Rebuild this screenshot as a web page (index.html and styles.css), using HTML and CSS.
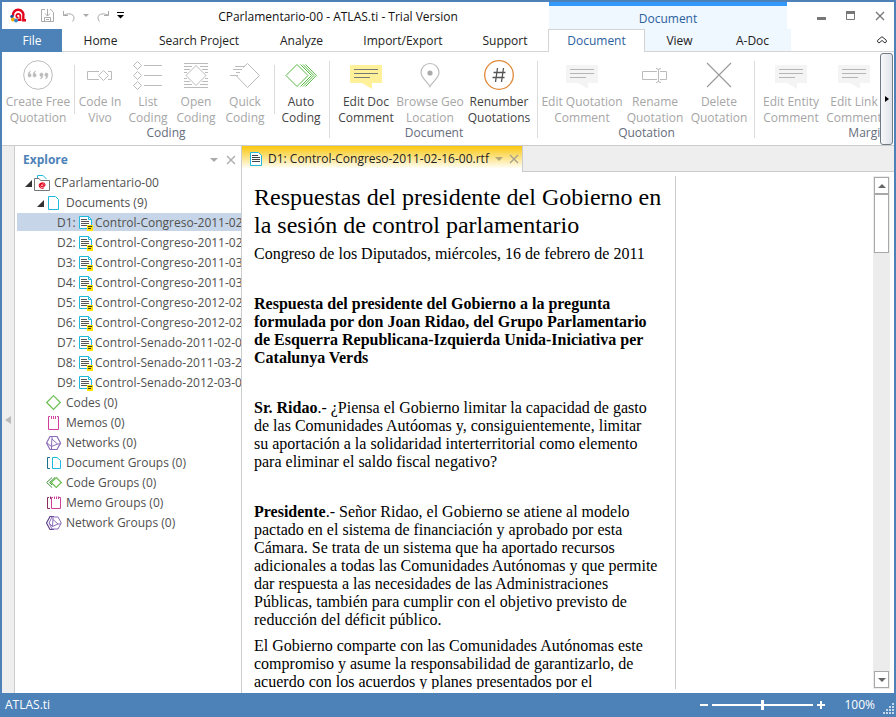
FILE: index.html
```html
<!DOCTYPE html>
<html lang="en">
<head>
<meta charset="utf-8">
<title>CParlamentario-00 - ATLAS.ti - Trial Version</title>
<link rel="stylesheet" href="styles.css">
</head>
<body>
<svg class="defs" aria-hidden="true">
  <symbol id="i-text-doc" viewBox="0 0 15 16"><path d="M.500 1.500H9.500L12.500 4.500V13.500H.500Z" fill="#fff" stroke="#1fb9dd"/><path d="M9.500 1.500V4.500H12.500" fill="none" stroke="#1fb9dd"/><path d="M2 4.500H8M2 6.500H10M2 8.500H10M2 10.500H8" stroke="#555"/><rect x="8" y="10" width="6" height="6" fill="#ffe400"/><path d="M9 11.500H13M9 13.500H12" stroke="#333"/></symbol>
  <symbol id="i-comment" viewBox="0 0 32 26"><path d="M0 1H32V19H22V25L12 19H0Z" fill="var(--note)"/><path d="M4 5.500H28M4 9.500H28M4 13.500H20" stroke="var(--line)" fill="none"/></symbol>
  <symbol id="i-close" viewBox="0 0 10 10"><path d="M1 1L9 9M9 1L1 9" stroke="currentColor" stroke-width="1.300" fill="none"/></symbol>
  <symbol id="i-down" viewBox="0 0 8 4"><path d="M0 0H8L4 4Z" fill="currentColor"/></symbol>
  <symbol id="i-open" viewBox="0 0 7 7"><path d="M7 0V7H0Z" fill="#333"/></symbol>
</svg>

<div class="window">
  <header class="titlebar">
    <div class="quick">
      <svg class="logo" viewBox="0 0 16 15"><path d="M3 8A5.300 5.300 0 1 1 13.300 8.500V12.300H16" fill="none" stroke="#e2001a" stroke-width="2.400"/><path d="M7.500 12H11.500M10.300 12V8A2 2 0 1 0 8.500 9.800" fill="none" stroke="#e2001a" stroke-width="1.800"/><circle cx="2" cy="8.500" r="1.700" fill="#1b4fa0"/><circle cx="3" cy="11.500" r="2" fill="#f5a800"/><circle cx="6" cy="12.500" r="1.900" fill="#3585c9"/></svg>
      <button class="plain" aria-label="Save"><svg width="14" height="14" viewBox="0 0 14 14" fill="none" stroke="#aaa"><path d="M4 .500H.500V12.500H12.500V3.500L10 .500H9M6.500 0V7M4 4.500L6.500 7L9 4.500M3.500 12V8.500H9.500V12M5 10.500H8"/></svg></button>
      <button class="plain" aria-label="Undo"><svg width="12" height="12" viewBox="0 0 12 12" fill="none" stroke="#aaa"><path d="M.500 1V5.500H5M.500 5.500C4 3 11 3 11 8Q11 10 9.500 11.500"/></svg></button>
      <button class="plain" aria-label="Undo history"><svg width="6" height="3" viewBox="0 0 8 4" color="#aaa"><use href="#i-down"/></svg></button>
      <button class="plain" aria-label="Redo"><svg width="12" height="12" viewBox="0 0 12 12" fill="none" stroke="#aaa"><path d="M11.500 1V5.500H7M11.500 5.500C8 3 1 3 1 8Q1 10 2.500 11.500"/></svg></button>
      <button class="plain" aria-label="Customize toolbar"><svg width="7" height="7" viewBox="0 0 7 7"><path d="M0 0H7V1H0ZM0 3H7L3.500 6.500Z" fill="#000"/></svg></button>
    </div>
    <h1 class="caption">CParlamentario-00 - ATLAS.ti - Trial Version</h1>
    <div class="context">Document</div>
    <div class="controls">
      <button class="plain" aria-label="Minimize"><svg width="10" height="10" viewBox="0 0 10 10"><path d="M0 6H9V9H0Z" fill="#777"/></svg></button>
      <button class="plain" aria-label="Maximize"><svg width="10" height="10" viewBox="0 0 10 10"><path d="M.500 1V8.500H8.500V1" fill="none" stroke="#777"/><path d="M0 0H9V3H0Z" fill="#777"/></svg></button>
      <button class="plain" aria-label="Close"><svg width="10" height="10" color="#777"><use href="#i-close"/></svg></button>
    </div>
  </header>

  <nav class="tabs">
    <button class="tab file">File</button>
    <button class="tab">Home</button>
    <button class="tab">Search Project</button>
    <button class="tab">Analyze</button>
    <button class="tab">Import/Export</button>
    <button class="tab">Support</button>
    <button class="tab current">Document</button>
    <button class="tab ctx">View</button>
    <button class="tab ctx">A-Doc</button>
    <button class="plain collapse" aria-label="Collapse ribbon"><svg width="10" height="8" viewBox="0 0 10 8" fill="none" stroke="#333"><path d="M.700 4.200L5 .700L9.300 4.200V6L8 7L5 4.500L2 7L.700 6Z"/></svg></button>
  </nav>

  <div class="ribbon">
    <div class="groups">
      <section class="group coding">
        <div class="tools">
          <button class="tool off w64"><svg width="30" height="30" viewBox="0 0 30 30"><circle cx="15" cy="15" r="14.300" fill="none" stroke="#bbb"/><path d="M7.500 11Q5 12 5 15A1.600 1.800 0 1 0 6.500 13.500Q6.500 12.300 7.500 11.500ZM12.500 11Q10 12 10 15A1.600 1.800 0 1 0 11.500 13.500Q11.500 12.300 12.500 11.500ZM17.500 19Q20 18 20 15A1.600 1.800 0 1 0 18.500 16.500Q18.500 17.700 17.500 18.500ZM22.500 19Q25 18 25 15A1.600 1.800 0 1 0 23.500 16.500Q23.500 17.700 22.500 18.500Z" fill="#bbb" stroke="#bbb" stroke-width=".500"/></svg><span>Create Free<br>Quotation</span></button>
          <i class="sep"></i>
          <button class="tool off w48"><svg width="26" height="30" viewBox="0 0 26 30" fill="none" stroke="#bbb"><path d="M12 19.500H.500V11.500H12M21 11.500H24.500V19.500H21M11.500 15.500L16.500 10.500L21.500 15.500L16.500 20.500Z"/></svg><span>Code In<br>Vivo</span></button>
          <button class="tool off w48"><svg width="30" height="30" viewBox="0 0 30 30" fill="none" stroke="#bbb"><path d="M.500 5.500L4.500 1.500L8.500 5.500L4.500 9.500ZM.500 15.500L4.500 11.500L8.500 15.500L4.500 19.500ZM.500 25.500L4.500 21.500L8.500 25.500L4.500 29.500ZM11 5.500H29M11 15.500H29M11 25.500H29"/></svg><span>List<br>Coding</span></button>
          <button class="tool off w48"><svg width="24" height="30" viewBox="0 0 24 30" fill="none" stroke="#bbb"><path d="M0 3.500H24M0 6.500H8M16 6.500H24M0 9.500H6M18 9.500H24M0 12.500H3M21 12.500H24M0 18.500H3M21 18.500H24M0 21.500H6M18 21.500H24M0 24.500H8M16 24.500H24M0 27.500H24M2 15.500L12 5.500L22 15.500L12 25.500Z"/></svg><span>Open<br>Coding</span></button>
          <button class="tool off w50"><svg width="30" height="30" viewBox="0 0 30 30" fill="none" stroke="#bbb"><path d="M13 7.500L17.500 3.500L29.500 15.500L17.500 27.500L6 15.500M5 6.500H15M3 9.500H12M6 12.500H10M0 15.500H8"/></svg><span>Quick<br>Coding</span></button>
          <i class="sep"></i>
          <button class="tool w50"><svg width="32" height="30" viewBox="0 0 32 30" fill="none" stroke="#5ab947"><path d="M1 15.500L12 4.500L23 15.500L12 26.500ZM15.500 4.500L26.500 15.500L15.500 26.500M18 4.500L28.800 15.500L18 26.500M20.500 4.500L31.300 15.500L20.500 26.500"/></svg><span>Auto<br>Coding</span></button>
        </div>
        <h2>Coding</h2>
      </section>
      <section class="group document">
        <div class="tools">
          <button class="tool w56 yellow"><svg class="note" width="32" height="26"><use href="#i-comment"/></svg><span>Edit Doc<br>Comment</span></button>
          <button class="tool off w72"><svg width="20" height="30" viewBox="0 0 20 30"><path d="M10 26.500C8 22 1 18 1 12.500A9 9 0 0 1 19 12.500C19 18 12 22 10 26.500Z" fill="none" stroke="#bbb" stroke-width="1.200"/><circle cx="10" cy="13" r="2.600" fill="#aaa"/></svg><span>Browse Geo<br>Location</span></button>
          <button class="tool w66"><svg width="30" height="30" viewBox="0 0 30 30" fill="none"><circle cx="15" cy="15" r="14.300" stroke="#e0883a" stroke-width="1.300"/><path d="M13.500 8L11.500 22M19.500 8L17.500 22M9.500 12.500H21.500M8.500 17.500H20.500" stroke="#555" stroke-width="1.300"/></svg><span>Renumber<br>Quotations</span></button>
        </div>
        <h2>Document</h2>
      </section>
      <section class="group quotation">
        <div class="tools">
          <button class="tool off w84"><svg class="note" width="32" height="26"><use href="#i-comment"/></svg><span>Edit Quotation<br>Comment</span></button>
          <button class="tool off w62"><svg width="26" height="30" viewBox="0 0 26 30" fill="none" stroke="#bbb"><path d="M15 19.500H.500V11.500H15M18 11.500H24.500V19.500H18M16.500 9V22M14 8.500Q16.500 8.500 16.500 10Q16.500 8.500 19 8.500M14 22.500Q16.500 22.500 16.500 21Q16.500 22.500 19 22.500"/></svg><span>Rename<br>Quotation</span></button>
          <button class="tool off w66"><svg width="26" height="30" viewBox="0 0 26 30"><path d="M1 3L25 27M25 3L1 27" fill="none" stroke="#999" stroke-width="1.100"/></svg><span>Delete<br>Quotation</span></button>
        </div>
        <h2>Quotation</h2>
      </section>
      <section class="group margin">
        <div class="tools">
          <button class="tool off w64"><svg class="note" width="32" height="26"><use href="#i-comment"/></svg><span>Edit Entity<br>Comment</span></button>
          <button class="tool off w62"><svg class="note" width="32" height="26"><use href="#i-comment"/></svg><span>Edit Link<br>Comment</span></button>
        </div>
        <h2>Margin</h2>
      </section>
    </div>
    <button class="more" aria-label="Scroll ribbon"><svg width="4" height="6" viewBox="0 0 4 6"><path d="M0 0L4 3L0 6Z"/></svg></button>
  </div>

  <div class="workspace">
    <button class="plain rail" aria-label="Collapse panel"><svg width="6" height="8" viewBox="0 0 6 8"><path d="M6 0V8L0 4Z" fill="#bbb"/></svg></button>
    <aside class="explorer">
      <div class="panel-head">
        <h2>Explore</h2>
        <button class="plain" aria-label="Panel menu"><svg width="8" height="4" color="#aaa"><use href="#i-down"/></svg></button>
        <button class="plain" aria-label="Close panel"><svg width="10" height="10" color="#aaa"><use href="#i-close"/></svg></button>
      </div>
      <ul class="tree">
        <li class="root"><svg width="7" height="7"><use href="#i-open"/></svg><svg width="16" height="16" viewBox="0 0 16 16"><path d="M3.500 3V.500H9L12.500 4" fill="none" stroke="#1fb9dd"/><path d="M.500 3.500H5L6.500 5.500H15.500V15.500H.500Z" fill="#fff" stroke="#777"/><path d="M9.300 11V9.500A1.500 1.300 0 1 0 8.800 11.300Q11 11.500 11 9.500A3 2.600 0 1 0 9.800 12.700" fill="none" stroke="#e2001a" stroke-width="1.100"/></svg><span>CParlamentario-00</span></li>
        <li class="branch"><svg width="7" height="7"><use href="#i-open"/></svg><svg width="12" height="14" viewBox="0 0 12 14"><path d="M.500 .500H7.500L10.500 3.500V13.500H.500Z" fill="#fff" stroke="#1fb9dd"/></svg><span>Documents (9)</span></li>
        <li class="doc selected"><b>D1:</b><svg width="15" height="16"><use href="#i-text-doc"/></svg><span>Control-Congreso-2011-02</span></li>
        <li class="doc"><b>D2:</b><svg width="15" height="16"><use href="#i-text-doc"/></svg><span>Control-Congreso-2011-02</span></li>
        <li class="doc"><b>D3:</b><svg width="15" height="16"><use href="#i-text-doc"/></svg><span>Control-Congreso-2011-03</span></li>
        <li class="doc"><b>D4:</b><svg width="15" height="16"><use href="#i-text-doc"/></svg><span>Control-Congreso-2011-03</span></li>
        <li class="doc"><b>D5:</b><svg width="15" height="16"><use href="#i-text-doc"/></svg><span>Control-Congreso-2012-02</span></li>
        <li class="doc"><b>D6:</b><svg width="15" height="16"><use href="#i-text-doc"/></svg><span>Control-Congreso-2012-02</span></li>
        <li class="doc"><b>D7:</b><svg width="15" height="16"><use href="#i-text-doc"/></svg><span>Control-Senado-2011-02-0</span></li>
        <li class="doc"><b>D8:</b><svg width="15" height="16"><use href="#i-text-doc"/></svg><span>Control-Senado-2011-03-2</span></li>
        <li class="doc"><b>D9:</b><svg width="15" height="16"><use href="#i-text-doc"/></svg><span>Control-Senado-2012-03-0</span></li>
        <li class="kind"><svg width="16" height="16" viewBox="0 0 16 16"><path d="M.700 7.500L7.500 .700L14.300 7.500L7.500 14.300Z" fill="none" stroke="#6cbf52" stroke-width="1.200"/></svg><span>Codes (0)</span></li>
        <li class="kind"><svg width="16" height="16" viewBox="0 0 16 16"><path d="M4 1.500H2.500V14.500H12.500V1.500H11M5.500 1V4M7.500 1V4M9.500 1V4" fill="none" stroke="#d0409a"/></svg><span>Memos (0)</span></li>
        <li class="kind"><svg width="16" height="16" viewBox="0 0 16 16"><path d="M4 1.500H11L14.500 8L11 14.500H4L.500 8Z" fill="none" stroke="#8a6bb8" stroke-width="1.200"/><path d="M6 2L5.500 11.500L1 8M6 4L11.500 9L5.500 11.500V14M11.500 9H14.500" fill="none" stroke="#8a6bb8"/></svg><span>Networks (0)</span></li>
        <li class="kind"><svg width="16" height="16" viewBox="0 0 16 16" fill="none"><path d="M4 2.500H1.500V13.500H4" stroke="#1a6f8a"/><path d="M6.500 2.500H11L14.500 5.500V13.500H6.500Z" stroke="#1fb9dd"/></svg><span>Document Groups (0)</span></li>
        <li class="kind"><svg width="16" height="16" viewBox="0 0 16 16" fill="none"><path d="M6 2.500L.700 7.500L6 12.500M9 2.500L3.700 7.500L6 10" stroke="#3f8f3c"/><path d="M5.200 7.500L10.300 2.500L15.300 7.500L10.300 12.500Z" stroke="#6cbf52" stroke-width="1.200"/></svg><span>Code Groups (0)</span></li>
        <li class="kind"><svg width="16" height="16" viewBox="0 0 16 16" fill="none"><path d="M3 2.500H1.500V13.500H4M4.500 1.500V4" stroke="#8c2d62"/><path d="M7 2.500H5.500V13.500H14.500V2.500H13M8.500 1.500V4M10.500 1.500V4M12.500 1.500V4" stroke="#d0409a"/></svg><span>Memo Groups (0)</span></li>
        <li class="kind"><svg width="16" height="16" viewBox="0 0 16 16" fill="none"><path d="M8 1.500H4L.500 8L4 14.500H8" stroke="#5b3f8a" stroke-width="1.200"/><path d="M6 2H12L15.300 8L12 14H6L3 8ZM7 3L6.500 11.500L3 8M7 4.500L12 9L6.500 11.500M12 9H15" stroke="#8a6bb8"/></svg><span>Network Groups (0)</span></li>
      </ul>
    </aside>
    <main class="editor">
      <div class="doc-tabs">
        <div class="doc-tab">
          <svg width="12" height="14" viewBox="0 0 12 14"><path d="M.500 .500H8.500L11.500 3.500V13.500H.500Z" fill="#fff" stroke="#1fb9dd"/><path d="M2 3.500H8M2 5.500H10M2 7.500H10M2 9.500H10" stroke="#444"/></svg>
          <span>D1: Control-Congreso-2011-02-16-00.rtf</span>
          <button class="plain" aria-label="Tab menu"><svg width="8" height="4" color="#b5a67a"><use href="#i-down"/></svg></button>
          <button class="plain" aria-label="Close tab"><svg width="10" height="10" color="#a5a08e"><use href="#i-close"/></svg></button>
        </div>
      </div>
      <div class="view">
        <article class="page">
          <h1>Respuestas del presidente del Gobierno en<br>la sesión de control parlamentario</h1>
          <p>Congreso de los Diputados, miércoles, 16 de febrero de 2011</p>
          <p class="block"><strong>Respuesta del presidente del Gobierno a la pregunta<br>formulada por don Joan Ridao, del Grupo Parlamentario<br>de Esquerra Republicana-Izquierda Unida-Iniciativa per<br>Catalunya Verds</strong></p>
          <p class="block"><strong>Sr. Ridao</strong>.- ¿Piensa el Gobierno limitar la capacidad de gasto<br>de las Comunidades Autóomas y, consiguientemente, limitar<br>su aportación a la solidaridad interterritorial como elemento<br>para eliminar el saldo fiscal negativo?</p>
          <p class="block"><strong>Presidente</strong>.- Señor Ridao, el Gobierno se atiene al modelo<br>pactado en el sistema de financiación y aprobado por esta<br>Cámara. Se trata de un sistema que ha aportado recursos<br>adicionales a todas las Comunidades Autónomas y que permite<br>dar respuesta a las necesidades de las Administraciones<br>Públicas, también para cumplir con el objetivo previsto de<br>reducción del déficit público.</p>
          <p class="next">El Gobierno comparte con las Comunidades Autónomas este<br>compromiso y asume la responsabilidad de garantizarlo, de<br>acuerdo con los acuerdos y planes presentados por el</p>
        </article>
        <div class="margin-area"></div>
        <div class="scrollbar">
          <button aria-label="Scroll up"><svg width="8" height="4" viewBox="0 0 8 4"><path d="M0 4L4 0L8 4Z" fill="#666"/></svg></button>
          <div class="thumb"></div>
          <button class="end" aria-label="Scroll down"><svg width="8" height="4" color="#666"><use href="#i-down"/></svg></button>
        </div>
      </div>
    </main>
  </div>

  <footer class="status">
    <span class="app">ATLAS.ti</span>
    <button class="plain" aria-label="Zoom out"><svg width="8" height="8"><path d="M0 3H8V5H0Z" fill="#fff"/></svg></button>
    <input type="range" min="0" max="200" value="100" aria-label="Zoom">
    <button class="plain" aria-label="Zoom in"><svg width="8" height="8"><path d="M0 3H3V0H5V3H8V5H5V8H3V5H0Z" fill="#fff"/></svg></button>
    <span class="percent">100%</span>
    <svg class="grip" width="11" height="11" fill="#c5d8ea"><path d="M9 0h2v2h-2zM9 3h2v2h-2zM6 3h2v2h-2zM9 6h2v2h-2zM6 6h2v2h-2zM3 6h2v2h-2zM9 9h2v2h-2zM6 9h2v2h-2zM3 9h2v2h-2zM0 9h2v2h-2z"/></svg>
  </footer>
</div>
</body>
</html>
```
FILE: styles.css
```css
* { box-sizing: border-box; }
html, body { height: 100%; margin: 0; }
body { font: 12px/16px "Open Sans", "Noto Sans", sans-serif; color: #444; background: #4d82b8; }
h1, h2, p, ul { margin: 0; padding: 0; font-size: inherit; font-weight: normal; }
button { font: inherit; color: inherit; margin: 0; padding: 0; border: 0; background: none; white-space: nowrap; }
svg { display: block; flex: none; }
.defs { position: absolute; width: 0; height: 0; }
.plain { display: flex; align-items: center; justify-content: center; }

.window { height: 100vh; display: flex; flex-direction: column; border: 2px solid #4d82b8; border-bottom: 0; background: #fff; overflow: hidden; }

.titlebar { flex: none; height: 27px; display: flex; }
.quick { flex: none; width: 125px; display: flex; align-items: center; padding-left: 8px; gap: 8px; }
.logo { width: 16px; height: 15px; margin-right: 7px; }
.caption { flex: 0 1 422px; text-align: center; line-height: 30px; color: #111; white-space: nowrap; }
.context { flex: none; width: 238px; border-top: 4px solid #3399ff; background: #eff7ff; color: #2b5f9e; text-align: center; line-height: 26px; }
.controls { flex: 1; display: flex; align-items: center; justify-content: flex-end; gap: 19px; padding-right: 9px; }

.tabs { flex: none; display: grid; grid-template-columns: 60px 77px 120px 85px 118px 86px 97px 69px 77px 1fr; height: 23px; }
.tab { padding-top: 2px; border-bottom: 1px solid #d4d4d4; color: #222; }
.file { background: #4d82b8; color: #fff; border-color: #4d82b8; }
.ctx { background: #eff7ff; }
.current { padding-top: 0; border: 1px solid #d4d4d4; border-bottom: 0; color: #2b5f9e; }
.collapse { border-bottom: 1px solid #d4d4d4; justify-content: flex-end; padding-right: 7px; }

.ribbon { flex: none; height: 94px; display: flex; border-bottom: 1px solid #ccc; }
.groups { flex: 1; min-width: 0; display: flex; overflow: hidden; }
.group { flex: none; padding-top: 8px; background: linear-gradient(#dcdcdc, #dcdcdc) no-repeat right 9px / 1px 77px; }
.coding { width: 328px; }
.document { width: 208px; }
.quotation { width: 217px; }
.margin { width: 226px; }
.tools { display: flex; height: 66px; padding-left: 2px; }
.coding .tools { padding-left: 4px; }
.document .tools { padding-left: 8px; }
.margin .tools { padding-left: 4px; }
.group h2 { text-align: center; line-height: 14px; color: #666c7c; }
.tool { flex: none; display: flex; flex-direction: column; align-items: center; gap: 4px; --note: #f4f4f4; --line: #b5b5b5; }
.tool.off { color: #a6a6a6; }
.tool.yellow { --note: #fff09a; --line: #777; }
.note { margin-top: 4px; }
.w48 { width: 48px; }
.w50 { width: 50px; }
.w56 { width: 56px; }
.w62 { width: 62px; }
.w64 { width: 64px; }
.w66 { width: 66px; }
.w72 { width: 72px; }
.w84 { width: 84px; }
.sep { width: 1px; height: 49px; margin: 5px 1px 0 4px; background: #dcdcdc; }
.more { flex: none; width: 13px; margin: 1px 1px 0 0; border: 1px solid #707a84; border-radius: 3px; background: linear-gradient(90deg, #f7f8fa, #dfe3ea); display: flex; align-items: center; justify-content: center; }

.workspace { flex: 1; min-height: 0; display: flex; }
.rail { flex: none; width: 13px; background: #eee; border-right: 1px solid #ccc; }
.explorer { flex: none; width: 227px; border-right: 1px solid #ccc; overflow: hidden; padding-left: 2px; }
.panel-head { display: flex; align-items: center; height: 27px; gap: 8px; padding: 0 5px 0 6px; }
.panel-head h2 { flex: 1; font-weight: bold; color: #4d82b8; }
.tree { list-style: none; color: #505050; }
.tree li { display: flex; align-items: center; height: 20px; white-space: nowrap; }
.tree b { flex: none; font-weight: normal; width: 22px; }
.root { padding-left: 8px; }
.root span { margin-left: 4px; }
.root svg + svg { margin-left: 2px; }
.branch { padding-left: 20px; }
.branch svg + svg { margin-left: 4px; }
.branch span { margin-left: 6px; }
.doc { padding-left: 40px; }
.doc span { margin-left: 1px; }
.kind { padding-left: 29px; }
.kind span { margin-left: 4px; }
.selected { background: linear-gradient(#c6d5e7, #c6d5e7) no-repeat 0 0 / 100% 18px; }

.editor { flex: 1; min-width: 0; display: flex; flex-direction: column; }
.doc-tabs { flex: none; height: 26px; background: #eee; display: flex; border-bottom: 1px solid #ccc; }
.doc-tab { width: 281px; height: 26px; display: flex; align-items: center; gap: 6px; padding: 0 7px 0 8px; border-right: 1px solid #ccc; background: linear-gradient(#f9c70c, #fff 88%); color: #222; white-space: nowrap; }
.view { flex: 1; min-height: 0; display: flex; padding: 4px 4px 4px 0; overflow: hidden; }
.page { flex: none; width: 434px; overflow: hidden; padding: 7px 0 0 12px; border-right: 1px solid #ccc; color: #000; font: 16px/18px "Liberation Serif", "Times New Roman", serif; white-space: nowrap; }
.page h1 { font-size: 24px; line-height: 28px; margin-bottom: 6px; }
.block { margin-top: 32px; }
.next { margin-top: 8px; }
.margin-area { flex: 1; }
.scrollbar { flex: none; width: 17px; padding: 1px; background: #ececec; display: flex; flex-direction: column; }
.scrollbar button { height: 17px; background: #fff; border: 1px solid #a8a8a8; display: flex; align-items: center; justify-content: center; }
.thumb { height: 59px; background: #fff; border: 1px solid #a8a8a8; }
.scrollbar .end { margin-top: auto; }

.status { flex: none; height: 24px; display: flex; align-items: center; padding-left: 3px; background: #4d82b8; color: #fff; }
.app { flex: 1; }
.status input { appearance: none; width: 101px; height: 10px; margin: 0 4px; background: linear-gradient(#fff, #fff) no-repeat center / 100% 2px; }
.status input::-webkit-slider-thumb { appearance: none; width: 3px; height: 10px; background: #fff; border: 0; border-radius: 0; }
.percent { width: 50px; text-align: right; margin-right: 8px; }
.grip { align-self: flex-end; margin-bottom: 3px; }
```
